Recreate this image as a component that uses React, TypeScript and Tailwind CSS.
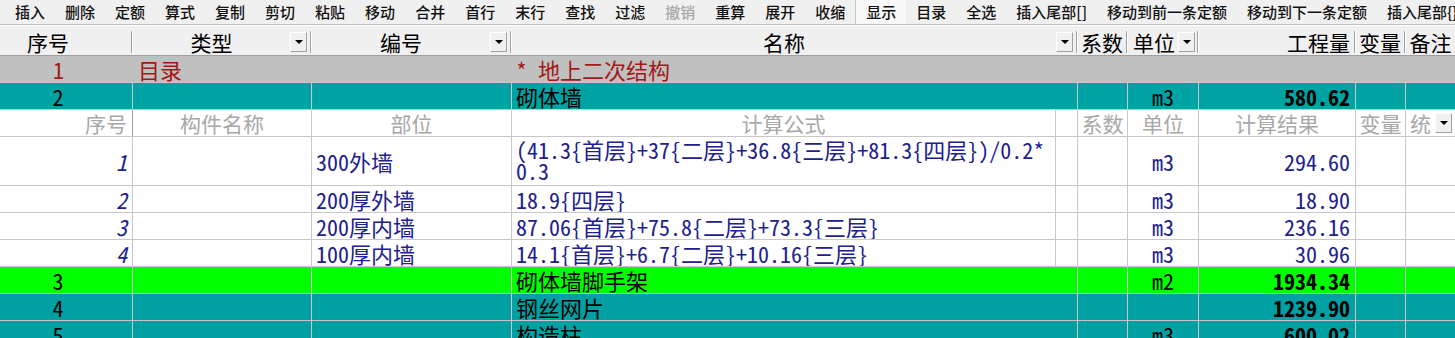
import React from 'react';

const tools = [
  '插入', '删除', '定额', '算式', '复制', '剪切', '粘贴', '移动', '合并', '首行', '末行', '查找',
  '过滤', '撤销', '重算', '展开', '收缩', '显示', '目录', '全选', '插入尾部[]', '移动到前一条定额',
  '移动到下一条定额', '插入尾部{}',
];

const font = "font-['Noto_Sans_Mono_CJK_SC','Noto_Sans_CJK_SC',monospace]";
const mainCols = 'grid grid-cols-[133px_179px_200px_566px_50px_71px_157px_50px_49px]';
const subCols = 'grid grid-cols-[133px_179px_200px_544px_22px_50px_71px_157px_50px_49px]';

function Drop() {
  return (
    <div className="w-[17px] h-[20px] shrink-0 flex items-center justify-center bg-[#f0f0f0] border border-t-white border-l-white border-r-[#a0a0a0] border-b-[#a0a0a0]">
      <div className="w-0 h-0 border-l-[4px] border-r-[4px] border-t-[4px] border-l-transparent border-r-transparent border-t-black" />
    </div>
  );
}

function Sep() {
  return <div className="w-[2px] h-[22px] shrink-0 border-l border-[#a0a0a0] border-r border-r-white" />;
}

function Toolbar() {
  return (
    <div className="flex h-[24px] pl-[5px] bg-[#f0f0f0] whitespace-nowrap overflow-hidden font-['Noto_Sans_CJK_SC',sans-serif] text-[15px] leading-[20px] font-medium">
      {tools.map((t) => (
        <div
          key={t}
          className={
            t === '显示'
              ? 'px-[10px] flex items-center border-l border-[#c8c8c8] bg-[#f8f8f8] text-[#111]'
              : t === '撤销'
              ? 'px-[10px] flex items-center text-[#a8a8a8]'
              : 'px-[10px] flex items-center text-[#111]'
          }
        >
          {t}
        </div>
      ))}
    </div>
  );
}

function Header() {
  return (
    <div className={`${mainCols} h-[28px] bg-[#f0f0f0] border-b border-[#a0a0a0] text-[21px] text-black leading-[22px]`}>
      <div className="flex items-center">
        <div className="flex-1 text-center pr-[35px]">序号</div>
        <Sep />
      </div>
      <div className="flex items-center">
        <div className="flex-1 text-center">类型</div>
        <Drop />
        <div className="w-[3px]" />
        <Sep />
      </div>
      <div className="flex items-center">
        <div className="flex-1 text-center">编号</div>
        <Drop />
        <div className="w-[3px]" />
        <Sep />
      </div>
      <div className="flex items-center">
        <div className="flex-1 text-center">名称</div>
        <Drop />
        <div className="w-[3px]" />
        <Sep />
      </div>
      <div className="flex items-center">
        <div className="flex-1 text-center">系数</div>
        <Sep />
      </div>
      <div className="flex items-center">
        <div className="flex-1 pl-[5px]">单位</div>
        <Drop />
        <div className="w-[2px]" />
        <Sep />
      </div>
      <div className="flex items-center">
        <div className="flex-1 text-right pr-[4px]">工程量</div>
        <Sep />
      </div>
      <div className="flex items-center">
        <div className="flex-1 text-center">变量</div>
        <Sep />
      </div>
      <div className="flex items-center">
        <div className="flex-1 text-center">备注</div>
      </div>
    </div>
  );
}

interface MainRowProps {
  bg: string;
  no: string;
  name: string;
  unit?: string;
  qty: string;
}

function MainRow({ bg, no, name, unit = '', qty }: MainRowProps) {
  const cell = 'flex items-center border-r border-[#c8c8c8] overflow-hidden whitespace-nowrap';
  return (
    <div className={`${mainCols} h-[27px] border-b border-[#c8c8c8] text-[22px] leading-[22px] text-black ${bg}`}>
      <div className={`${cell} justify-center pr-[16px]`}>{no}</div>
      <div className={cell} />
      <div className={cell} />
      <div className={`${cell} pl-[4px]`}>{name}</div>
      <div className={cell} />
      <div className={`${cell} justify-center`}>{unit}</div>
      <div className={`${cell} justify-end pr-[5px] font-bold`}>{qty}</div>
      <div className={cell} />
      <div className="flex items-center" />
    </div>
  );
}

function SubHeader() {
  const cell = 'flex items-center border-r border-[#c8c8c8] overflow-hidden whitespace-nowrap';
  return (
    <div className={`${subCols} h-[27px] bg-white border-b border-[#c8c8c8] text-[21px] leading-[22px] text-[#a8a8a8]`}>
      <div className={`${cell} justify-end pr-[5px] border-r-[#a0a0a0]`}>序号</div>
      <div className={`${cell} justify-center`}>构件名称</div>
      <div className={`${cell} justify-center`}>部位</div>
      <div className={`${cell} justify-center`}>计算公式</div>
      <div className={cell} />
      <div className={`${cell} justify-center`}>系数</div>
      <div className={`${cell} justify-center`}>单位</div>
      <div className={`${cell} justify-center`}>计算结果</div>
      <div className={`${cell} justify-center`}>变量</div>
      <div className="flex items-center pl-[4px] gap-[4px]">
        <span>统</span>
        <Drop />
      </div>
    </div>
  );
}

interface SubRowProps {
  no: string;
  part: string;
  formula: React.ReactNode;
  qty: string;
  tall?: boolean;
}

function SubRow({ no, part, formula, qty, tall = false }: SubRowProps) {
  const cell = 'flex items-center border-r border-[#c8c8c8] overflow-hidden whitespace-nowrap';
  return (
    <div
      className={`${subCols} ${tall ? 'h-[49px]' : 'h-[27px]'} bg-white border-b border-[#c8c8c8] text-[22px] leading-[22px] text-[#20208f]`}
    >
      <div className={`${cell} justify-end pr-[5px] italic`}>{no}</div>
      <div className={cell} />
      <div className={`${cell} pl-[4px]`}>{part}</div>
      <div
        className={
          tall
            ? 'flex items-start pt-[2px] pl-[4px] leading-[21px] border-r border-[#c8c8c8] whitespace-nowrap'
            : `${cell} pl-[4px]`
        }
      >
        <div>{formula}</div>
      </div>
      <div className={cell} />
      <div className={cell} />
      <div className={`${cell} justify-center`}>m3</div>
      <div className={`${cell} justify-end pr-[5px]`}>{qty}</div>
      <div className={cell} />
      <div className="flex items-center" />
    </div>
  );
}

export default function App() {
  return (
    <div className={`w-[1455px] h-[338px] overflow-hidden bg-white ${font}`}>
      <Toolbar />
      <div className="h-[4px] bg-[#f0f0f0] border-t border-[#c0c0c0]">
        <div className="h-[1px] bg-white" />
      </div>
      <Header />
      <div className="h-[27px] bg-[#c0c0c0] border-b border-[#c8c8c8] flex items-center text-[22px] leading-[22px] text-[#a31818] whitespace-nowrap">
        <div className="w-[133px] text-center pr-[16px]">1</div>
        <div className="w-[379px] pl-[5px]">目录</div>
        <div className="pl-[4px]">* 地上二次结构</div>
      </div>
      <MainRow bg="bg-[#00a3a3]" no="2" name="砌体墙" unit="m3" qty="580.62" />
      <SubHeader />
      <SubRow
        tall
        no="1"
        part="300外墙"
        formula={
          <>
            (41.3{'{'}首层{'}'}+37{'{'}二层{'}'}+36.8{'{'}三层{'}'}+81.3{'{'}四层{'}'})/0.2*
            <br />
            0.3
          </>
        }
        qty="294.60"
      />
      <SubRow no="2" part="200厚外墙" formula="18.9{四层}" qty="18.90" />
      <SubRow no="3" part="200厚内墙" formula="87.06{首层}+75.8{二层}+73.3{三层}" qty="236.16" />
      <SubRow no="4" part="100厚内墙" formula="14.1{首层}+6.7{二层}+10.16{三层}" qty="30.96" />
      <MainRow bg="bg-[#00ff00]" no="3" name="砌体墙脚手架" unit="m2" qty="1934.34" />
      <MainRow bg="bg-[#00a0a3]" no="4" name="钢丝网片" qty="1239.90" />
      <MainRow bg="bg-[#00a0a3]" no="5" name="构造柱" unit="m3" qty="600.02" />
    </div>
  );
}
